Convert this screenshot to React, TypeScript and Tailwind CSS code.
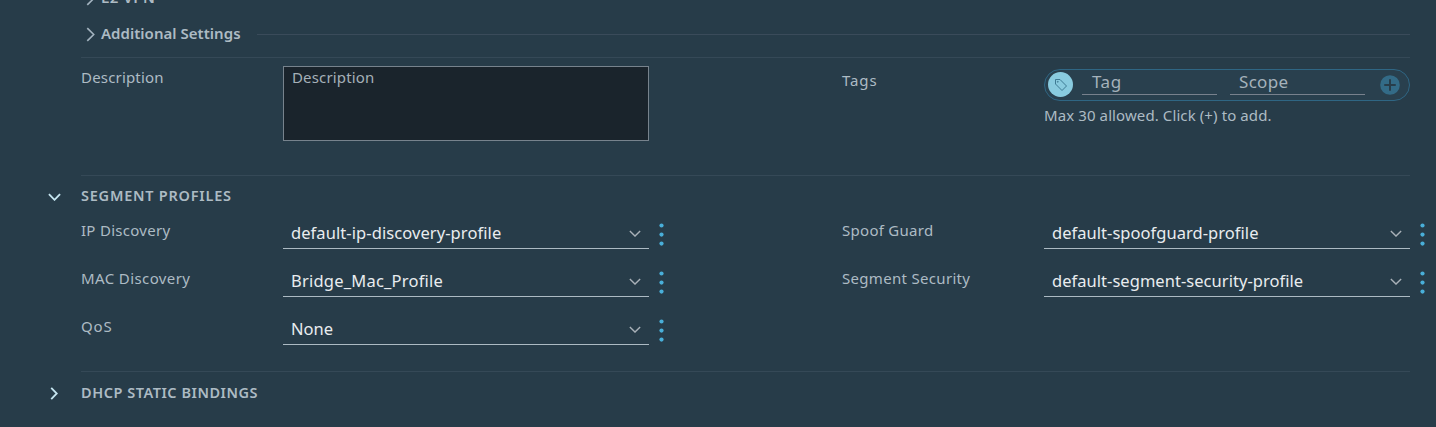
import React from 'react';

type Point = 'right' | 'down';

function Chevron({ point, className }: { point: Point; className: string }) {
  return (
    <svg viewBox={point === 'right' ? '0 0 8 14' : '0 0 14 8'} fill="none" stroke="currentColor" className={className}>
      <path d={point === 'right' ? 'M1 1 L7 7 L1 13' : 'M1 1 L7 7 L13 1'} />
    </svg>
  );
}

function SubSection({ title, tracking, line }: { title: string; tracking: string; line: boolean }) {
  return (
    <div className="flex h-5 items-center pl-[5px]">
      <Chevron point="right" className="mr-[6px] h-[15px] w-[9px] shrink-0 stroke-[1.5] text-[#a3b3bf]" />
      <span className={`pb-[2px] text-[15px] leading-[18px] font-semibold text-[#adbbc4] ${tracking}`}>{title}</span>
      {line && <span className="ml-[16px] h-px flex-1 bg-[#3a4b5a]" />}
    </div>
  );
}

function Label({ text, tracking }: { text: string; tracking: string }) {
  return <div className={`w-[202px] shrink-0 text-[15px] leading-[18px] text-[#adbbc4] ${tracking}`}>{text}</div>;
}

function SelectRow({ label, labelTracking, value, valueTracking }: { label: string; labelTracking: string; value: string; valueTracking: string }) {
  return (
    <div className="flex h-12 items-start">
      <Label text={label} tracking={labelTracking} />
      <button className="flex h-7 w-[366px] shrink-0 items-center justify-between border-b border-[#acbac3] pr-[8px] pb-[3px] pl-[8px] text-left">
        <span className={`text-[16.5px] leading-5 text-[#e9ecef] ${valueTracking}`}>{value}</span>
        <Chevron point="down" className="h-[7px] w-[12px] stroke-[1.6] text-[#a9b1b8]" />
      </button>
      <svg viewBox="0 0 6 24" fill="#49afd9" className="mt-[2px] ml-[10px] h-6 w-[6px] shrink-0">
        <circle cx="2.5" cy="2.5" r="2.1" />
        <circle cx="2.5" cy="11.6" r="2.1" />
        <circle cx="2.5" cy="20.6" r="2.1" />
      </svg>
    </div>
  );
}

function SectionHeader({ title, open, tracking }: { title: string; open: boolean; tracking: string }) {
  return (
    <div className="flex h-5">
      <div className="flex w-[81px] shrink-0 items-center pt-[1px] pl-[48px] text-[#c5e5f0]">
        {open ? (
          <Chevron point="down" className="h-[8px] w-[13px] stroke-2" />
        ) : (
          <Chevron point="right" className="ml-[2px] h-[13px] w-[8px] stroke-2" />
        )}
      </div>
      <h2 className={`text-[14.5px] leading-[18px] font-semibold text-[#adbbc4] ${tracking}`}>{title}</h2>
    </div>
  );
}

function TagInput() {
  return (
    <div className="flex h-8 w-[366px] items-start rounded-full border border-[#2f6684] bg-[#29404e] pt-[2px] pl-[3px]">
      <span className="flex size-[25px] shrink-0 items-center justify-center rounded-full bg-[#89cbdf]">
        <svg viewBox="0 0 14 14" fill="none" stroke="#35708a" strokeWidth="0.9" className="size-[14px]">
          <path d="M1.5 1.5 H6 L12.5 8 L8 12.5 L1.5 6 Z" strokeLinejoin="round" />
          <circle cx="3.8" cy="3.8" r="0.45" />
        </svg>
      </span>
      <span className="ml-[9px] h-[23px] w-[135px] shrink-0 border-b border-[#78818d] pl-[10px] text-[17px] leading-5 tracking-[0.5px] text-[#a5b2bb]">Tag</span>
      <span className="ml-[13px] h-[23px] w-[135px] shrink-0 border-b border-[#78818d] pl-[9px] text-[17px] leading-5 tracking-[0.3px] text-[#a5b2bb]">Scope</span>
      <svg viewBox="0 0 20 20" className="mt-[3px] ml-[15px] size-5 shrink-0">
        <circle cx="10" cy="10" r="9.8" fill="#336b87" />
        <path d="M10 5 V15 M5 10 H15" stroke="#283d4a" strokeWidth="2" strokeLinecap="round" />
      </svg>
    </div>
  );
}

export default function App() {
  return (
    <main className="h-[427px] w-[1436px] overflow-hidden bg-[#273c49] font-['Noto_Sans',sans-serif]">
      <div className="ml-[81px] w-[1329px]">
        <div className="-mt-[12px]">
          <SubSection title="L2 VPN" tracking="tracking-[0.55px]" line={false} />
        </div>
        <div className="mt-[16px]">
          <SubSection title="Additional Settings" tracking="tracking-[0.03px]" line />
        </div>
        <div className="mt-[13px] flex h-[118px] border-t border-[#354957]">
          <div className="flex w-[761px] shrink-0 pt-[8px]">
            <div className="pt-[2px]">
              <Label text="Description" tracking="tracking-[0.18px]" />
            </div>
            <div className="h-[75px] w-[366px] border border-[#77838d] bg-[#1a242c] pt-px pl-[8px] text-[15px] leading-[18px] tracking-[0.15px] text-[#a5b0b8]">
              Description
            </div>
          </div>
          <div className="flex pt-[11px]">
            <div className="pt-[2px]">
              <Label text="Tags" tracking="tracking-[0.9px]" />
            </div>
            <div>
              <TagInput />
              <p className="mt-[5px] text-[15px] leading-[18px] tracking-[0.1px] text-[#adbbc4]">Max 30 allowed. Click (+) to add.</p>
            </div>
          </div>
        </div>
        <div className="h-px bg-[#354957]" />
      </div>
      <div className="pt-[10px]">
        <SectionHeader title="SEGMENT PROFILES" open tracking="tracking-[0.77px]" />
      </div>
      <div className="ml-[81px] flex h-[150px] pt-[15px]">
        <div className="w-[761px] shrink-0">
          <SelectRow label="IP Discovery" labelTracking="tracking-[0.28px]" value="default-ip-discovery-profile" valueTracking="tracking-[0.08px]" />
          <SelectRow label="MAC Discovery" labelTracking="tracking-[0.4px]" value="Bridge_Mac_Profile" valueTracking="tracking-[0.22px]" />
          <SelectRow label="QoS" labelTracking="tracking-[0.9px]" value="None" valueTracking="tracking-[0px]" />
        </div>
        <div>
          <SelectRow label="Spoof Guard" labelTracking="tracking-[0.28px]" value="default-spoofguard-profile" valueTracking="tracking-[0.04px]" />
          <SelectRow label="Segment Security" labelTracking="tracking-[0.31px]" value="default-segment-security-profile" valueTracking="tracking-[0.04px]" />
        </div>
      </div>
      <div className="mt-[15px] ml-[81px] h-px w-[1329px] bg-[#354957]" />
      <div className="pt-[11px]">
        <SectionHeader title="DHCP STATIC BINDINGS" open={false} tracking="tracking-[0.53px]" />
      </div>
    </main>
  );
}
